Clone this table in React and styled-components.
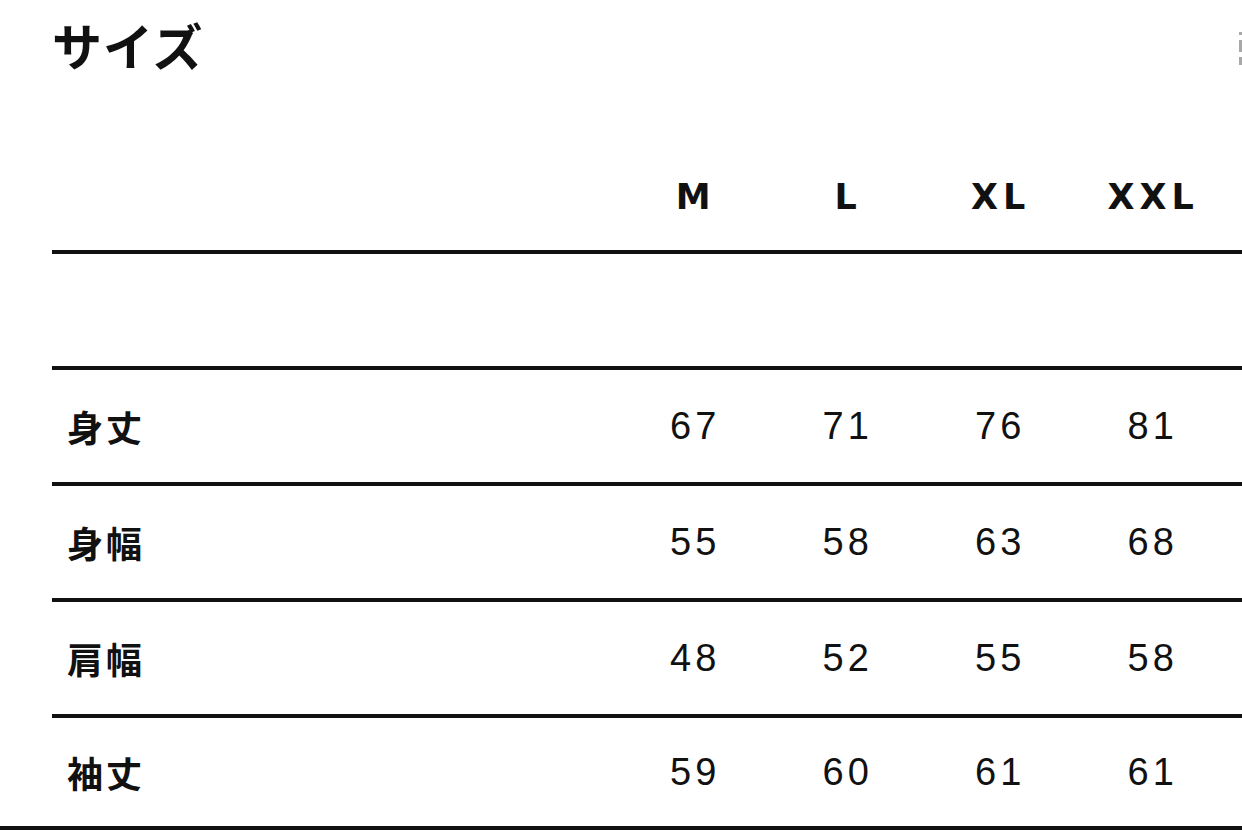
import React from 'react';
import styled, { createGlobalStyle } from 'styled-components';

const GlobalStyle = createGlobalStyle`
  html, body {
    margin: 0;
    padding: 0;
    background: #ffffff;
  }
  body {
    width: 1242px;
    height: 830px;
    overflow: hidden;
    font-family: 'Liberation Sans', 'Noto Sans CJK JP', sans-serif;
    color: #111111;
  }
`;

const Page = styled.div`
  position: relative;
  width: 1242px;
  height: 830px;
  padding-left: 52px;
  box-sizing: border-box;
  overflow: hidden;
`;

const Title = styled.h1`
  margin: 0;
  height: 138px;
  padding-top: 14px;
  box-sizing: border-box;
  font-family: 'Noto Sans CJK JP', sans-serif;
  font-size: 50px;
  line-height: 60px;
  font-weight: 700;
  letter-spacing: 1px;
`;

const ScrollMarks = styled.div`
  position: absolute;
  top: 32px;
  right: 0;
  width: 3px;
  display: flex;
  flex-direction: column;
  gap: 5px;
`;

const Mark = styled.span`
  display: block;
  width: 3px;
  height: ${(p) => p.h}px;
  background: #a8a8a8;
`;

const Row = styled.div`
  display: flex;
  align-items: center;
  height: ${(p) => (p.header ? 106 : p.last ? 108 : 112)}px;
  padding: ${(p) => (p.header ? '6px 15px 0 15px' : '0 15px')};
  box-sizing: content-box;
  border-bottom: ${(p) => (p.last ? 'none' : '4px solid #111')};
`;

const Label = styled.div`
  flex: 1;
  font-family: 'Noto Sans CJK JP', sans-serif;
  font-size: 36px;
  font-weight: 700;
  letter-spacing: 3px;
`;

const Size = styled.div`
  width: 152.5px;
  text-align: center;
  font-family: 'DejaVu Sans', sans-serif;
  font-size: 35px;
  font-weight: 700;
  letter-spacing: 5px;
  text-indent: 5px;
`;

const Value = styled.div`
  width: 152.5px;
  text-align: center;
  font-family: 'Liberation Sans', sans-serif;
  font-size: 38px;
  font-weight: 400;
  letter-spacing: 4px;
  text-indent: 4px;
`;

const BottomRule = styled.div`
  margin-left: -52px;
  width: 1242px;
  height: 4px;
  background: #111;
`;

const sizes = ['M', 'L', 'XL', 'XXL'];

const rows = [
  { label: '身丈', values: [67, 71, 76, 81] },
  { label: '身幅', values: [55, 58, 63, 68] },
  { label: '肩幅', values: [48, 52, 55, 58] },
  { label: '袖丈', values: [59, 60, 61, 61] },
];

export default function App() {
  return (
    <>
      <GlobalStyle />
      <Page>
        <Title>サイズ</Title>
        <ScrollMarks>
          <Mark h={3} />
          <Mark h={12} />
          <Mark h={8} />
        </ScrollMarks>
        <Row header>
          <Label />
          {sizes.map((s) => (
            <Size key={s}>{s}</Size>
          ))}
        </Row>
        <Row />
        {rows.map((r, i) => (
          <Row key={r.label} last={i === rows.length - 1}>
            <Label>{r.label}</Label>
            {r.values.map((v, j) => (
              <Value key={j}>{v}</Value>
            ))}
          </Row>
        ))}
        <BottomRule />
      </Page>
    </>
  );
}
